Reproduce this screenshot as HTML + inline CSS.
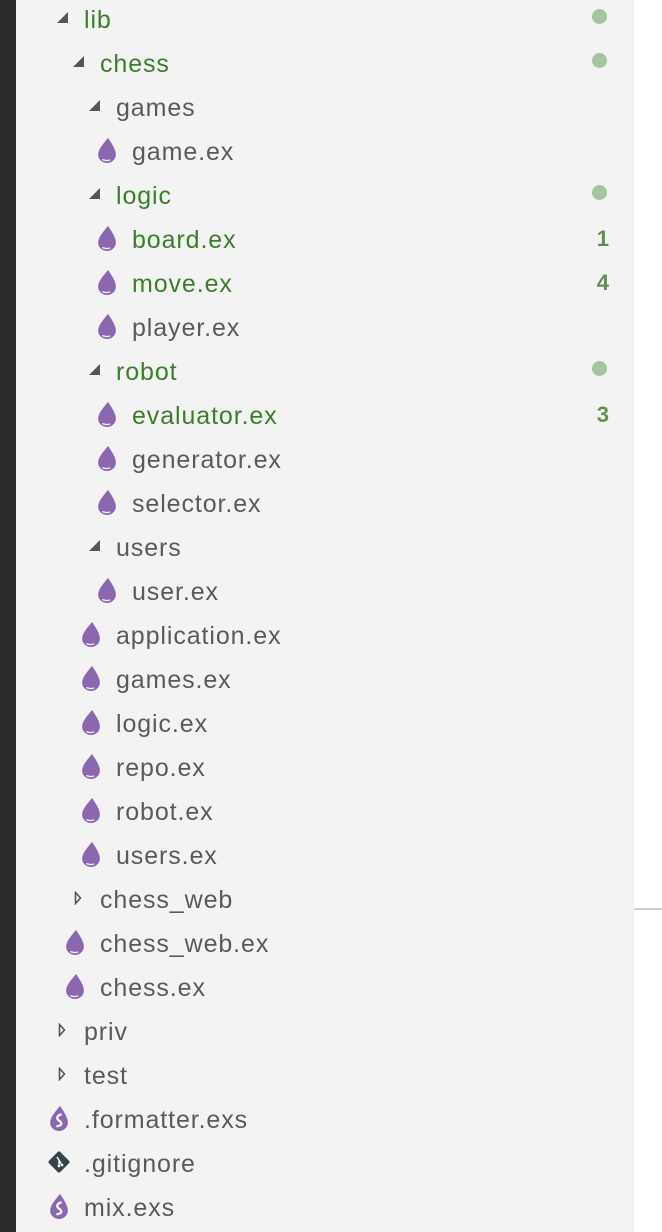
<!DOCTYPE html><html><head><meta charset="utf-8"><style>
body{margin:0;width:662px;height:1232px;background:#fff;position:relative;overflow:hidden;font-family:"Liberation Sans",sans-serif}
#bar{position:absolute;left:0;top:0;width:16px;height:1232px;background:#2b2b2b}
#pan{position:absolute;left:16px;top:0;width:618px;height:1232px;background:#f3f3f3}
#ln{position:absolute;left:634px;top:908px;width:28px;height:2px;background:#d0d0d0}
.r{position:absolute;left:0;width:634px;height:44px;line-height:44px;font-size:25px;letter-spacing:0.9px;color:#5a5a5a}
.r span.t{position:absolute;top:2px}
.g{color:#3b7f2d}
.dn{position:absolute;top:16px;width:0;height:0;border-left:11px solid transparent;border-bottom:11px solid #555}
.rt{position:absolute;top:15px;width:8px;height:14px}
.dr{position:absolute;top:10px;width:20px;height:25px}
.dot{position:absolute;left:592px;top:13px;width:15px;height:15px;border-radius:50%;background:#a6c4a0}
.n{position:absolute;right:25px;top:1px;color:#5e9150;font-weight:bold;font-size:22px;letter-spacing:0}
</style></head><body>
<div id="bar"></div><div id="pan"></div><div id="ln"></div>
<svg width="0" height="0" style="position:absolute"><defs>
<symbol id="d" viewBox="0 0 18 24"><path d="M10 0C5 6 0.5 11 0.5 16a8.5 8 0 0 0 17 0C17.5 11 14 6 10 0z" fill="#8a67ae"/><path d="M4.5 20.5c2 1.3 5.5 1.5 7.5 .5" stroke="#ece5f3" stroke-width="1.4" fill="none"/></symbol>
<symbol id="s" viewBox="0 0 18 24"><path d="M10 0C5 6 0.5 11 0.5 16a8.5 8 0 0 0 17 0C17.5 11 14 6 10 0z" fill="#8a67ae"/><path d="M11.5 8c-4.5 1-5.5 4-2.5 6s3.5 5-2.5 5.5" stroke="#f3f3f3" stroke-width="2.2" fill="none"/></symbol>
<symbol id="r" viewBox="0 0 8 14"><path d="M1.5 1.5L6.5 7L1.5 12.5Z" fill="none" stroke="#555" stroke-width="1.6"/></symbol>
</defs></svg>

<div class="r g" style="top:-4px"><i class="dn" style="left:57px"></i><span class="t" style="left:84px">lib</span><i class="dot"></i></div>
<div class="r g" style="top:40px"><i class="dn" style="left:73px"></i><span class="t" style="left:100px">chess</span><i class="dot"></i></div>
<div class="r" style="top:84px"><i class="dn" style="left:89px"></i><span class="t" style="left:116px">games</span></div>
<div class="r" style="top:128px"><svg class="dr" style="left:97px"><use href="#d"/></svg><span class="t" style="left:132px">game.ex</span></div>
<div class="r g" style="top:172px"><i class="dn" style="left:89px"></i><span class="t" style="left:116px">logic</span><i class="dot"></i></div>
<div class="r g" style="top:216px"><svg class="dr" style="left:97px"><use href="#d"/></svg><span class="t" style="left:132px">board.ex</span><span class="n">1</span></div>
<div class="r g" style="top:260px"><svg class="dr" style="left:97px"><use href="#d"/></svg><span class="t" style="left:132px">move.ex</span><span class="n">4</span></div>
<div class="r" style="top:304px"><svg class="dr" style="left:97px"><use href="#d"/></svg><span class="t" style="left:132px">player.ex</span></div>
<div class="r g" style="top:348px"><i class="dn" style="left:89px"></i><span class="t" style="left:116px">robot</span><i class="dot"></i></div>
<div class="r g" style="top:392px"><svg class="dr" style="left:97px"><use href="#d"/></svg><span class="t" style="left:132px">evaluator.ex</span><span class="n">3</span></div>
<div class="r" style="top:436px"><svg class="dr" style="left:97px"><use href="#d"/></svg><span class="t" style="left:132px">generator.ex</span></div>
<div class="r" style="top:480px"><svg class="dr" style="left:97px"><use href="#d"/></svg><span class="t" style="left:132px">selector.ex</span></div>
<div class="r" style="top:524px"><i class="dn" style="left:89px"></i><span class="t" style="left:116px">users</span></div>
<div class="r" style="top:568px"><svg class="dr" style="left:97px"><use href="#d"/></svg><span class="t" style="left:132px">user.ex</span></div>
<div class="r" style="top:612px"><svg class="dr" style="left:81px"><use href="#d"/></svg><span class="t" style="left:116px">application.ex</span></div>
<div class="r" style="top:656px"><svg class="dr" style="left:81px"><use href="#d"/></svg><span class="t" style="left:116px">games.ex</span></div>
<div class="r" style="top:700px"><svg class="dr" style="left:81px"><use href="#d"/></svg><span class="t" style="left:116px">logic.ex</span></div>
<div class="r" style="top:744px"><svg class="dr" style="left:81px"><use href="#d"/></svg><span class="t" style="left:116px">repo.ex</span></div>
<div class="r" style="top:788px"><svg class="dr" style="left:81px"><use href="#d"/></svg><span class="t" style="left:116px">robot.ex</span></div>
<div class="r" style="top:832px"><svg class="dr" style="left:81px"><use href="#d"/></svg><span class="t" style="left:116px">users.ex</span></div>
<div class="r" style="top:876px"><svg class="rt" style="left:74px"><use href="#r"/></svg><span class="t" style="left:100px">chess_web</span></div>
<div class="r" style="top:920px"><svg class="dr" style="left:65px"><use href="#d"/></svg><span class="t" style="left:100px">chess_web.ex</span></div>
<div class="r" style="top:964px"><svg class="dr" style="left:65px"><use href="#d"/></svg><span class="t" style="left:100px">chess.ex</span></div>
<div class="r" style="top:1008px"><svg class="rt" style="left:58px"><use href="#r"/></svg><span class="t" style="left:84px">priv</span></div>
<div class="r" style="top:1052px"><svg class="rt" style="left:58px"><use href="#r"/></svg><span class="t" style="left:84px">test</span></div>
<div class="r" style="top:1096px"><svg class="dr" style="left:49px"><use href="#s"/></svg><span class="t" style="left:84px">.formatter.exs</span></div>
<div class="r" style="top:1140px"><svg style="position:absolute;left:47px;top:10px" width="24" height="24" viewBox="0 0 24 24"><rect x="4" y="4" width="16" height="16" rx="2" transform="rotate(45 12 12)" fill="#34444c"/><path d="M10 7l5 8M12 10v6" stroke="#fff" stroke-width="1.4"/><circle cx="12" cy="16" r="1.3" fill="#fff"/><circle cx="15" cy="15" r="1.3" fill="#fff"/></svg><span class="t" style="left:84px">.gitignore</span></div>
<div class="r" style="top:1184px"><svg class="dr" style="left:49px"><use href="#s"/></svg><span class="t" style="left:84px">mix.exs</span></div>
</body></html>
